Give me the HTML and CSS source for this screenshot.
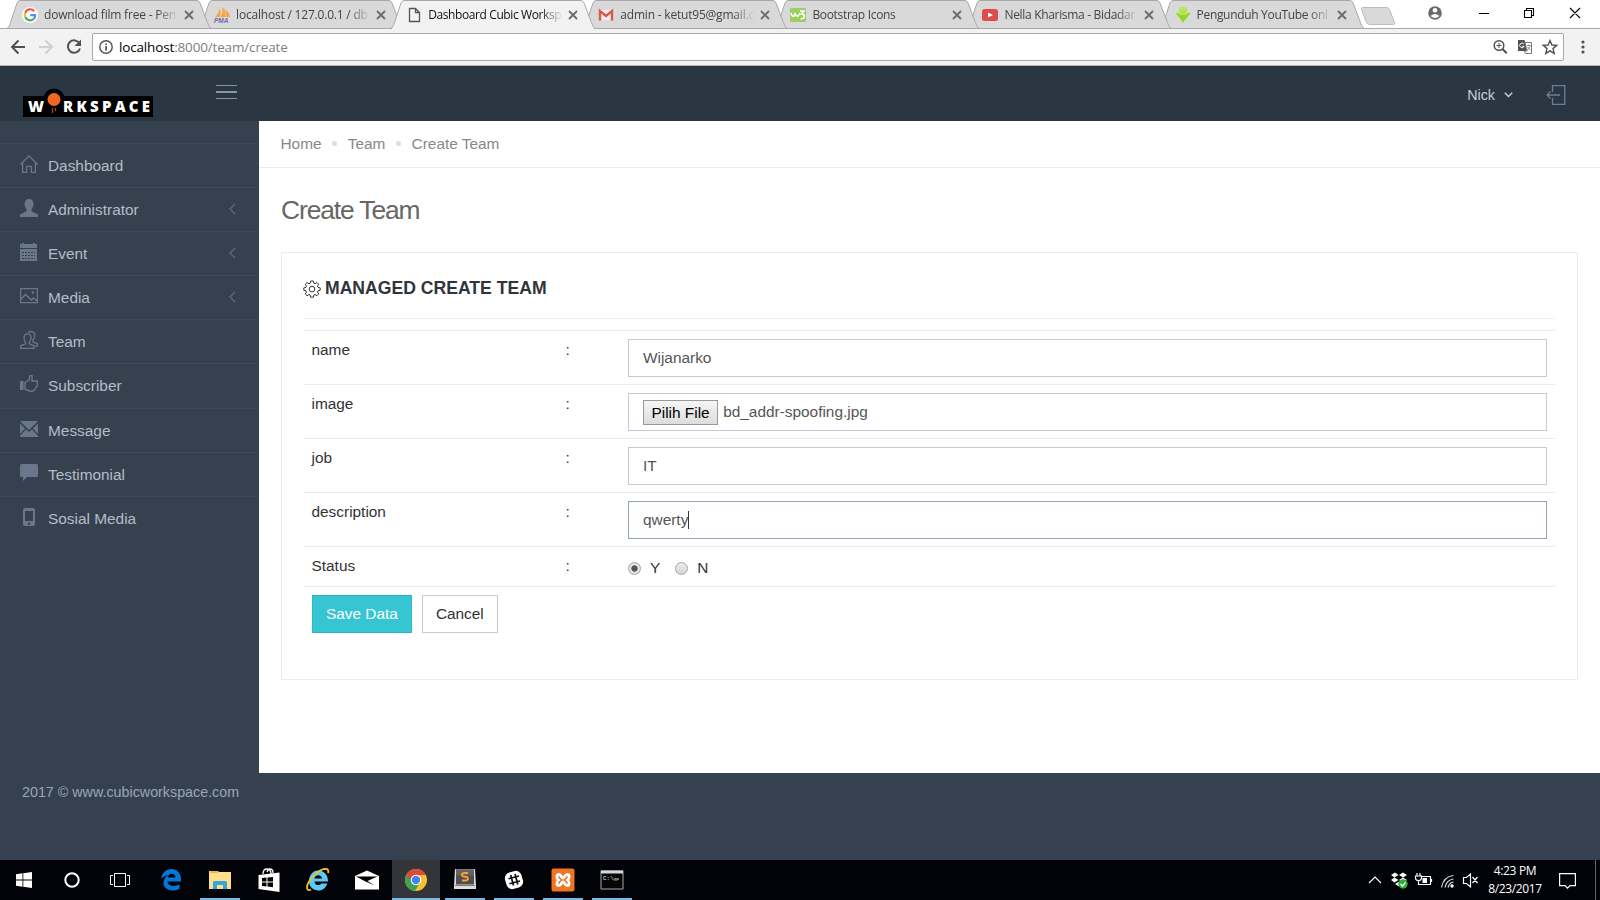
FILE: index.html
```html
<!DOCTYPE html>
<html lang="id">
<head>
<meta charset="utf-8">
<title>Dashboard Cubic Workspace</title>
<link rel="stylesheet" href="styles.css">
</head>
<body>
<svg class="defs" aria-hidden="true">
  <symbol id="tab-shape" viewBox="0 0 206 29"><path d="M.5 28.5C3 28 3.500 25 4.500 22.500L11 3Q12 .5 14 .5H191Q193 .5 194 3L201.500 22.500Q203 28 205.500 28.500Z"/></symbol>
  <symbol id="x" viewBox="0 0 10 10"><path d="M1 1l8 8M9 1L1 9" fill="none" stroke="#6b6b6b" stroke-width="1.800"/></symbol>
  <symbol id="left" viewBox="0 0 7 12"><path d="M6 1L1 6l5 5" fill="none" stroke="#606c7d" stroke-width="1.200"/></symbol>
</svg>
<div class="screen">
  <div class="tabstrip">
    <div class="tabs">
      <div class="tab t1"><svg class="shape"><use href="#tab-shape"/></svg>
        <svg class="fav" viewBox="0 0 16 16"><circle cx="8" cy="8" r="8" fill="#fff"/><g fill="none" stroke-width="2.300"><path d="M12.200 4.200A5.300 5.300 0 0 0 3.300 5.700" stroke="#e8594c"/><path d="M3.300 5.700a5.300 5.300 0 0 0 0 4.600" stroke="#f4bd2d"/><path d="M3.300 10.300a5.300 5.300 0 0 0 8.300 1.700" stroke="#4caf62"/><path d="M11.600 12A5 5 0 0 0 13.100 8.200H8.200" stroke="#5b8def"/></g></svg>
        <span class="label">download film free - Pen</span><svg class="close"><use href="#x"/></svg></div>
      <div class="tab t2"><svg class="shape"><use href="#tab-shape"/></svg>
        <svg class="fav" viewBox="0 0 16 16"><path d="M1 10Q5 6 5.500 1q2 4 1 9zM7 10Q9 5 8.500 0q4 3 3 10zM12 10V3q3 2 4 7z" fill="#f5a54c"/><text x="0" y="16" class="pma">PMA</text></svg>
        <span class="label">localhost / 127.0.0.1 / db</span><svg class="close"><use href="#x"/></svg></div>
      <div class="tab t3 active"><svg class="shape"><use href="#tab-shape"/></svg>
        <svg class="fav" viewBox="0 0 16 16"><path d="M3.500 1.500h6l4 4v9h-10zM9.500 1.500v4h4" fill="none" stroke="#555" stroke-width="1.300"/></svg>
        <span class="label">Dashboard Cubic Worksp</span><svg class="close"><use href="#x"/></svg></div>
      <div class="tab t4"><svg class="shape"><use href="#tab-shape"/></svg>
        <svg class="fav" viewBox="0 0 16 16"><path d="M2 3h12v10H2z" fill="#f2eded"/><path d="M2 13.500V4l6 5 6-5v9.500" fill="none" stroke="#d9574b" stroke-width="2.400"/></svg>
        <span class="label">admin - ketut95@gmail.c</span><svg class="close"><use href="#x"/></svg></div>
      <div class="tab t5"><svg class="shape"><use href="#tab-shape"/></svg>
        <svg class="fav" viewBox="0 0 16 16"><rect y="1" width="16" height="14" rx="1" fill="#9bcf63"/><path d="M1 6q1 4 3 3 1-1 1-3 1 4 3 3 1-1 2-3M10 4h4l-2.500 3q3 0 3 2.500-1 3-4 2" fill="none" stroke="#fff" stroke-width="1.500"/></svg>
        <span class="label">Bootstrap Icons</span><svg class="close"><use href="#x"/></svg></div>
      <div class="tab t6"><svg class="shape"><use href="#tab-shape"/></svg>
        <svg class="fav" viewBox="0 0 16 16"><rect y="2" width="16" height="12" rx="2.500" fill="#df4c4c"/><path d="M6 5.500l5 2.500-5 2.500z" fill="#fff"/></svg>
        <span class="label">Nella Kharisma - Bidadar</span><svg class="close"><use href="#x"/></svg></div>
      <div class="tab t7"><svg class="shape"><use href="#tab-shape"/></svg>
        <svg class="fav" viewBox="0 0 16 16"><path d="M4 0h2v2h1V0h2v2h1V0h2v6h3.500L8 15.500.500 6H4z" fill="#b4e84a"/><path d="M1 6h3v2h8V6h3.500L8 15.500z" fill="#93d334"/></svg>
        <span class="label">Pengunduh YouTube onl</span><svg class="close"><use href="#x"/></svg></div>
    </div>
    <svg class="newtab" viewBox="0 0 36 18"><path d="M2.500.5h24q2 0 3 2l5 13q.5 2-1 2h-24q-2 0-3-2l-5-13q-.5-2 1-2z" fill="#d9d9d9" stroke="#bcbcbc"/></svg>
    <svg class="winctl" viewBox="0 0 160 28"><circle cx="7" cy="13" r="6.800" fill="#6a6a6a"/><circle cx="7" cy="10.300" r="2.300" fill="#fff"/><path d="M2.500 16q4.500-4 9 0-4.500 4-9 0" fill="#fff"/><path d="M51 13.500h10M96.500 10.500h7v7h-7zM98.500 10.500v-2h7v7h-2M142 8l10 10M152 8l-10 10" fill="none" stroke="#000" stroke-width="1.100"/></svg>
  </div>
  <div class="toolbar">
    <svg class="nav" viewBox="0 0 92 36"><g fill="none" stroke-width="2"><path d="M25 18H12M18.500 11.500L12 18l6.500 6.500" stroke="#505050"/><path d="M39 18h13M45.500 11.500L52 18l-6.500 6.500" stroke="#d0d0d0"/><path d="M79.500 14.500A6.200 6.200 0 1 0 80 19.500" stroke="#505050"/></g><path d="M81 10.500v6.500h-6.500z" fill="#505050"/></svg>
    <div class="omnibox">
      <svg class="info" viewBox="0 0 14 14"><circle cx="7" cy="7" r="6.200" fill="none" stroke="#505050" stroke-width="1.400"/><path d="M6.200 6h1.700v4.500H6.200zM6.200 3.400h1.700V5H6.200z" fill="#505050"/></svg>
      <span class="url"><b>localhost</b>:8000/team/create</span>
      <svg class="boxicons" viewBox="0 0 68 18"><g fill="none" stroke="#505050"><circle cx="6" cy="7.500" r="4.800" stroke-width="1.500"/><path d="M9.500 11l4.200 4.200" stroke-width="2"/><path d="M3.500 7.500h5M6 5v5"/></g><path d="M25 2h6.500l3 11H25z" fill="#505050"/><path d="M32 4.500h6.500v11h-6L31 13h3z" fill="#fff" stroke="#777"/><path d="M33.800 7.500h4M35.700 6.500v1M37 8q-1 3-3 4M34.500 9l3 3" stroke="#777" stroke-width=".8" fill="none"/><path d="M30.800 6a2.300 2.300 0 1 0 .3 2.400h-2" stroke="#fff" fill="none"/><path d="M57 2.500l1.900 4.500 4.800.4-3.700 3.200 1.200 4.800L57 12.800l-4.200 2.600 1.200-4.800-3.700-3.200 4.800-.4z" fill="none" stroke="#505050" stroke-width="1.400"/></svg>
    </div>
    <svg class="dots" viewBox="0 0 4 16"><g fill="#505050"><circle cx="2" cy="3" r="1.600"/><circle cx="2" cy="8" r="1.600"/><circle cx="2" cy="13" r="1.600"/></g></svg>
  </div>
  <header class="header">
    <svg class="logo" viewBox="0 0 131 30"><circle cx="31" cy="11" r="10.500" fill="#000"/><path d="M0 8h130v21H0z" fill="#000"/><circle cx="31" cy="11.500" r="6.500" fill="#f26522"/><path d="M29.500 20v5M32.500 20v3" stroke="#a8481c" stroke-width="1.300"/><text class="logotext" x="5" y="24" textLength="16" lengthAdjust="spacingAndGlyphs">W</text><text class="logotext" x="40" y="24" textLength="87">RKSPACE</text></svg>
    <div class="burger"><i></i><i></i><i></i></div>
    <div class="user"><span>Nick</span><svg class="caret" viewBox="0 0 9 6"><path d="M.8.8l3.700 3.700L8.200.8" fill="none" stroke="#c6cfda" stroke-width="1.500"/></svg></div>
    <svg class="logout" viewBox="0 0 20 20"><path d="M6.500 7V.7h12.300v18.600H6.500V13M14 10H1M4.500 6.500L1 10l3.500 3.500" fill="none" stroke="#6b7f98" stroke-width="1.300"/></svg>
  </header>
  <div class="middle">
    <nav class="sidebar">
      <a class="item"><svg viewBox="0 0 18 18"><path d="M.5 9.500L9 .9l8.500 8.600M2.600 8v9.400h4v-6h4.800v6h4V8" fill="none" stroke="#6a778b" stroke-width="1.300"/></svg>Dashboard</a>
      <a class="item"><svg viewBox="0 0 18 18"><path d="M9 0c3 0 4.500 2 4.500 5 0 2.500-1 4-2 5.300v2L18 15.500V18H0v-2.500l6.500-3.200v-2C5.500 9 4.500 7.500 4.500 5 4.500 2 6 0 9 0z"/></svg>Administrator<svg class="arrow"><use href="#left"/></svg></a>
      <a class="item"><svg viewBox="0 0 18 18"><path d="M0 1h2V0h2v1h9V0h2v1h2v4H0zM0 6h17v12H0z"/><path d="M2 9.500h13M2 12.500h13M2 15.500h13" stroke="#364150" stroke-dasharray="2 1"/></svg>Event<svg class="arrow"><use href="#left"/></svg></a>
      <a class="item"><svg viewBox="0 0 18 18"><path d="M.6 1.600h16.800v14H.6zM1 12l4.500-4.500 6 5.500 2-2L17 14" fill="none" stroke="#6a778b" stroke-width="1.300"/><circle cx="13" cy="5.500" r="1.200"/></svg>Media<svg class="arrow"><use href="#left"/></svg></a>
      <a class="item"><svg viewBox="0 0 18 18"><path d="M7.500 2.800c2.300 0 3.500 1.700 3.500 4 0 2-.7 3.200-1.700 4.400v1.600l4.700 2v2.600H.6v-2.600l5-2v-1.600C4.500 10 4 8.800 4 6.800c0-2.300 1.200-4 3.500-4zM8 1.500Q9 .6 11 .6c2.500 0 3.800 1.800 3.800 4 0 2-.8 3.200-1.800 4.200V11l4.400 1.800v2.400h-2.400" fill="none" stroke="#6a778b" stroke-width="1.300"/></svg>Team</a>
      <a class="item tall"><svg viewBox="0 0 18 18"><path d="M0 6h3.500v9H0z"/><path d="M5 7.500L9 5l1-4.400h2V6h5.400v4.500L14 15.500l-2.500 1L7 15l-2-1z" fill="none" stroke="#6a778b" stroke-width="1.400"/></svg>Subscriber</a>
      <a class="item"><svg viewBox="0 0 18 18"><path d="M0 1h18L9 10zM0 3.500l5 5L0 14zM18 3.500l-5 5 5 5.500zM6 9.500l3 2.500 3-2.500 6 6.500v1H0v-1z"/></svg>Message</a>
      <a class="item"><svg viewBox="0 0 18 18"><path d="M1.500 0h15q1.500 0 1.500 1.500v10q0 1.500-1.500 1.500H7l-4 4v-4H1.500Q0 13 0 11.500v-10Q0 0 1.500 0z"/></svg>Testimonial</a>
      <a class="item"><svg viewBox="0 0 18 18"><path fill-rule="evenodd" d="M5 0h8q2 0 2 2v14q0 2-2 2H5q-2 0-2-2V2q0-2 2-2zM5 3v10h8V3zM9 14.500a1.200 1.200 0 1 0 .01 0z"/></svg>Sosial Media</a>
    </nav>
    <main class="content">
      <div class="crumbs"><span>Home</span><i></i><span>Team</span><i></i><span>Create Team</span></div>
      <h1>Create Team</h1>
      <section class="card">
        <h2><svg viewBox="0 0 18 18"><g fill="none" stroke="#2f353b"><path d="M7.700 1h2.600l.5 2.200 1.200.5 2-1.200 1.700 1.700-1.200 2 .5 1.200 2.200.5v2.400l-2.200.5-.5 1.200 1.200 2-1.700 1.700-2-1.200-1.200.5-.5 2.200H7.700l-.5-2.200-1.200-.5-2 1.200-1.700-1.700 1.200-2-.5-1.200L.8 10.300V7.900L3 7.400l.5-1.200-1.200-2L4 2.500l2 1.200 1.200-.5z"/><circle cx="9" cy="9.100" r="2.800"/></g></svg>MANAGED CREATE TEAM</h2>
        <form class="rows">
          <div class="row"><label>name</label><span>:</span><div class="field">Wijanarko</div></div>
          <div class="row"><label>image</label><span>:</span><div class="field"><span class="pick">Pilih File</span>bd_addr-spoofing.jpg</div></div>
          <div class="row"><label>job</label><span>:</span><div class="field">IT</div></div>
          <div class="row"><label>description</label><span>:</span><div class="field focus">qwerty<i class="cursor"></i></div></div>
          <div class="row status"><label>Status</label><span>:</span><div class="radios"><i class="radio on"></i><span>Y</span><i class="radio"></i><span>N</span></div></div>
          <div class="actions"><span class="btn save">Save Data</span><span class="btn">Cancel</span></div>
        </form>
      </section>
    </main>
  </div>
  <footer class="footer">2017 © www.cubicworkspace.com</footer>
  <div class="taskbar">
    <div class="slot"><svg viewBox="0 0 24 24"><path d="M4 6.300l6.500-1v6.200H4zM11.300 5.200L20 4v7.500h-8.700zM4 12.500h6.500v6.200L4 17.700zM11.300 12.500H20V20l-8.700-1.200z" fill="#fff"/></svg></div>
    <div class="slot"><svg viewBox="0 0 24 24"><circle cx="12" cy="12" r="6.700" fill="none" stroke="#fff" stroke-width="2"/></svg></div>
    <div class="slot"><svg viewBox="0 0 24 24"><path d="M6.500 5.500h11v13h-11zM5 7.500H2.500v9H5M19 7.500h2.500v9H19" fill="none" stroke="#fff"/></svg></div>
    <div class="slot apps"><svg viewBox="0 0 24 24"><path d="M2 11C3 4 8 1 12.500 1 18.500 1 22 5.500 22 11v2.500H8.500c.5 5 7.500 5.500 12 2.700v4.500C14 24.500 4.500 22 4.500 15c0-3.500 2-6.500 5-8C6 7.500 3.500 9 2 11zm6.800-1.500h7.500c0-5-6.800-5-7.500 0z" fill="#0078d7"/></svg></div>
    <div class="slot run"><svg viewBox="0 0 24 24"><path d="M1 3h9l1 1h12v17H1z" fill="#ffe08a"/><path d="M2 3h8v2H2z" fill="#f0b93a"/><path d="M5 21v-6.500Q5 13 6.500 13h11q1.500 0 1.500 1.500V21h-4v-4H9v4z" fill="#33a6de"/></svg></div>
    <div class="slot"><svg viewBox="0 0 24 24"><path d="M6 6q0-5 4-5t4 5M10 4q1-3 3-3 3 0 3 4" fill="none" stroke="#fff" stroke-width="1.300"/><path d="M1.500 7L22.500 4.500V24l-21-3z" fill="#fff"/><path d="M5 10l4.500-.5v4H5zM10.500 9.400L16 9v4.500h-5.500zM5 14.500h4.500v4L5 18zM10.500 14.500H16v4.700l-5.500-.6z" fill="#000"/></svg></div>
    <div class="slot"><svg viewBox="0 0 24 24"><path d="M12 2.500c6 0 10 4 10 11H8.500c.5 4 4 4.500 7 2h6C19.500 20 16.500 22.500 12.500 22.500 7 22.500 3 18.500 3 13S7 2.500 12 2.500zM8.500 10.500H16C15.500 6.500 9.500 6 8.500 10.500z" fill="#5fcaf5"/><path d="M5 21.500C1 24-1 19 4 12 9 4.500 18-1 21.500 1.500c1 .8 1 2 .5 3.500" fill="none" stroke="#f5c518" stroke-width="1.800"/></svg></div>
    <div class="slot"><svg viewBox="0 0 24 24"><path d="M0 8l12-5.500L24 8v13.500H0z" fill="#fff"/><path d="M1 8.500h21.500l-10 4.500 7 4.500-9-4z" fill="#000"/></svg></div>
    <div class="slot run wide"><svg viewBox="0 0 24 24"><circle cx="12" cy="12" r="11" fill="#f5c22f"/><path d="M12 12L2.500 6.500A11 11 0 0 0 11 23l5-8.500z" fill="#3ba257"/><path d="M2.500 6.500A11 11 0 0 1 21.800 7H12L7.700 14.500z" fill="#dc4a3d"/><circle cx="12" cy="12" r="5.300" fill="#fff"/><circle cx="12" cy="12" r="4.200" fill="#4285f4"/></svg></div>
    <div class="slot run"><svg viewBox="0 0 24 24"><path d="M2 1h20l1 17v3H1v-3z" fill="#ddd"/><path d="M3 1.500h18v15H3z" fill="#4e4e4e"/><path d="M3 1.500h18v6H3z" fill="#636363"/><path d="M2 17.500h20" stroke="#777"/><path d="M15 5h-3.500Q9 5 9 6.800t2.500 1.900h1Q15 8.700 15 10.600t-2.500 1.900H9" fill="none" stroke="#ff9d35" stroke-width="1.900"/></svg></div>
    <div class="slot run"><svg viewBox="0 0 24 24"><rect x="3.500" y="3.500" width="17" height="17" rx="6" fill="#fff" transform="rotate(-17 12 12)"/><path d="M8.700 7l2.800 10.500M13 6l2.800 10.500M6.500 10.800L17 8M7.500 15.800L18 13" stroke="#111" stroke-width="1.700"/></svg></div>
    <div class="slot run"><svg viewBox="0 0 24 24"><rect x=".5" y=".5" width="23" height="23" rx="2" fill="#f07423"/><path d="M8 6.500c2.500 0 2 3.500 4 3.500s1.500-3.500 4-3.500S19 10 16.500 12c2.500 2 2 5.500-.5 5.500s-2-3.500-4-3.500-1.500 3.500-4 3.500S5 14 7.500 12C5 10 5.500 6.500 8 6.500z" fill="none" stroke="#fff" stroke-width="2.800"/></svg></div>
    <div class="slot run"><svg viewBox="0 0 24 24"><path d="M1 3h22v18H1z" fill="#050505" stroke="#aaa"/><path d="M1 2.500h22v3H1z" fill="#d7d7d7"/><text x="3" y="11.500" class="cmd">C:\_</text><path d="M14 11h5" stroke="#ddd"/></svg></div>
    <div class="tray">
      <svg class="trayicons" viewBox="0 0 113 20"><g fill="none" stroke="#fff" stroke-width="1.200"><path d="M1 13l6-6 6 6"/><path d="M53 6.500h9.500v8H51M63.500 9v3M47.500 6h6v2q0 2.500-3 2.500t-3-2.500zM49 6V3M52 6V3M50.500 10.500v4H53"/><path d="M73.500 17.500Q75.500 6.500 85.500 5.500M77 17.500Q78.500 10 85.500 9M80 17.500Q81.500 12.500 85.500 12" stroke="#ddd"/><path d="M95.500 7.500h3l4-3.500v13l-4-3.500h-3zM104.500 7l5 6M109.500 7l-5 6"/></g><path d="M54.500 8H59v5h-4.500z" fill="#fff"/><circle cx="84" cy="16" r="1.700" fill="#fff"/><path d="M23 5l4-2.500 3.500 2.500-4 2.500zM31 5l4-2.500L39 5l-4 2.500zM23 10l3.500-2.500 4 2.500-4 2.500zM31 10l4-2.500 4 2.500-4 2.500zM27 14l4-2.500 4 2.500-4 2.500z" fill="#fff"/><circle cx="35" cy="14" r="4.700" fill="#2fae3c"/><path d="M32.500 14l2 2 3-3.500" fill="none" stroke="#fff" stroke-width="1.200"/></svg>
      <div class="clock"><span>4:23 PM</span><span>8/23/2017</span></div>
      <svg class="notice" viewBox="0 0 17 17"><path d="M.6 1.600h15.800v12H11l-2.500 2.500L6 13.600H.6z" fill="none" stroke="#fff" stroke-width="1.200"/></svg>
    </div>
  </div>
</div>
</body>
</html>
```

FILE: styles.css
```css
* { box-sizing: border-box; }
body { margin: 0; font-family: "Liberation Sans", Arial, sans-serif; font-size: 15.4px; color: #333; }
svg { display: block; flex: none; }
.defs { position: absolute; width: 0; height: 0; }
.screen { width: 1600px; height: 900px; display: flex; flex-direction: column; overflow: hidden; background: #364150; }

/* browser window */
.tabstrip { height: 29px; flex: none; display: flex; background: #fff; border-bottom: 1px solid #a9a9a9; font-family: "Open Sans", sans-serif; font-size: 12px; padding-left: 6px; }
.tabs { display: flex; width: 1354px; flex: none; }
.tab { position: relative; width: 192.1px; height: 29px; flex: none; display: flex; align-items: center; padding-left: 16px; color: #444; }
.shape { position: absolute; left: 0; top: 0; width: 206px; height: 29px; fill: #d9d9d9; stroke: #a9a9a9; }
.t1 { z-index: 7; } .t2 { z-index: 6; } .t4 { z-index: 5; } .t5 { z-index: 4; } .t6 { z-index: 3; } .t7 { z-index: 2; }
.active { z-index: 8; color: #111; }
.active .shape { fill: #f2f2f2; }
.active::after { content: ""; position: absolute; left: 2px; width: 202px; top: 28px; height: 2px; background: #f2f2f2; }
.fav, .label, .close { position: relative; }
.fav { width: 16px; height: 16px; margin-right: 6px; }
.label { width: 134px; white-space: nowrap; letter-spacing: -.32px; -webkit-mask-image: linear-gradient(90deg, #000 112px, transparent 135px); mask-image: linear-gradient(90deg, #000 112px, transparent 135px); }
.t1 .label, .t2 .label, .t4 .label { letter-spacing: -.2px; }
.t3 .label { letter-spacing: -.4px; }
.close { width: 10px; height: 10px; margin-left: 6px; }
.pma { font: italic bold 6.500px "Liberation Sans", sans-serif; fill: #6c6ca8; }
.newtab { width: 36px; height: 18px; margin-top: 7px; }
.winctl { width: 160px; height: 28px; margin-left: 32px; }
.toolbar { height: 37px; flex: none; display: flex; align-items: center; background: #f2f2f2; border-bottom: 1px solid #b6b4b6; }
.nav { width: 92px; height: 36px; }
.omnibox { width: 1472px; height: 28px; display: flex; align-items: center; border: 1px solid #a9a9a9; border-radius: 2px; background: #fff; padding-left: 6px; }
.info { width: 14px; height: 14px; }
.url { margin-left: 6px; font-family: "Open Sans", sans-serif; font-size: 13.500px; letter-spacing: -.16px; color: #808080; flex: 1; }
.url b { font-weight: 400; color: #000; }
.boxicons { width: 68px; height: 18px; margin-right: 2px; }
.dots { width: 4px; height: 16px; margin-left: 17px; }

/* application */
.header { height: 55px; flex: none; display: flex; background: #2b3643; }
.logo { width: 131px; height: 30px; margin: 22px 0 0 23px; }
.logotext { font: 800 15px "Open Sans", sans-serif; fill: #fff; }
.burger { width: 21px; margin: 19px 0 0 62px; display: flex; flex-direction: column; gap: 5px; }
.burger i { height: 1px; background: #8796ab; }
.burger i:nth-child(2) { height: 2px; }
.user { display: flex; align-items: center; margin-left: auto; color: #c6cfda; font-size: 14.300px; padding-top: 3px; }
.caret { width: 9px; height: 6px; margin-left: 9px; }
.logout { width: 20px; height: 20px; margin: 19px 34px 0 33px; }
.middle { height: 652px; flex: none; display: flex; }
.sidebar { width: 259px; flex: none; padding-top: 22px; background: #364150; }
.item { height: 44px; display: flex; align-items: center; border-top: 1px solid #3d4957; padding: 0 23px 0 20px; color: #b4bcc8; }
.tall { height: 45px; padding-bottom: 1px; }
.item svg { width: 18px; height: 18px; margin: -3px 10px 0 0; fill: #6a778b; }
.item .arrow { width: 7px; height: 12px; margin: -1px 0 0 auto; }
.content { flex: 1; background: #fff; }
.crumbs { height: 47px; display: flex; align-items: center; border-bottom: 1px solid #e7ecf1; padding: 0 0 1px 21.500px; color: #888; }
.crumbs i { width: 5px; height: 5px; border-radius: 50%; background: #ddd; margin: 0 10.600px; }
h1 { height: 84px; margin: 0; padding: 27px 0 0 22px; font-size: 26.400px; line-height: 30px; font-weight: 400; letter-spacing: -1.100px; color: #666; }
.card { width: 1297px; height: 428px; margin-left: 22px; border: 1px solid #e7ecf1; padding: 13px 22px; }
h2 { height: 53px; margin: 0; display: flex; align-items: center; padding-bottom: 8px; border-bottom: 1px solid #eef1f5; font-size: 17.600px; color: #2f353b; }
h2 svg { width: 18px; height: 18px; margin: 1px 4px 0 -1px; }
.rows { margin-top: 11px; }
.row { height: 54px; display: grid; grid-template-columns: 254px 61px 1fr; border-top: 1px solid #e7ecf1; padding: 8px 8px 0 7.500px; }
.row label, .row > span { line-height: 21px; }
.field { height: 38px; display: flex; align-items: center; margin-left: 1.500px; border: 1px solid #c2cad8; padding: 0 14px; color: #555; }
.focus { border-color: #93a1bb; }
.cursor { width: 1px; height: 18px; background: #333; }
.pick { height: 25px; line-height: 23px; border: 1px solid #999; background: linear-gradient(#f6f6f6, #ddd); color: #000; padding: 0 7.500px; margin-right: 5px; }
.status { height: 40px; }
.radios { display: flex; align-items: center; height: 25px; margin-left: 1.500px; }
.radio { width: 13px; height: 13px; border: 1px solid #a5a5a5; border-radius: 50%; background: linear-gradient(#eee, #d5d5d5); margin-top: 2px; }
.on { background: radial-gradient(circle, #555 0 2.800px, #e2e2e2 3.500px); }
.radios span { margin: 0 15px 0 9px; }
.actions { display: flex; gap: 10px; padding: 8px; border-top: 1px solid #e7ecf1; }
.btn { height: 38px; line-height: 36px; border: 1px solid #ccc; padding: 0 13px; }
.save { background: #36c6d3; border-color: #2bb8c4; color: #fff; }
.footer { height: 87px; flex: none; padding: 11px 22px; color: #98a6ba; font-size: 14.300px; }

/* desktop taskbar */
.taskbar { height: 40px; flex: none; display: flex; gap: 1px; background: #010308; }
.slot { position: relative; width: 48px; height: 40px; flex: none; display: flex; align-items: center; justify-content: center; }
.slot:nth-child(-n+2) { margin-right: -1px; }
.slot svg { width: 24px; height: 24px; }
.apps { margin-left: 2px; }
.run::after { content: ""; position: absolute; left: 4px; right: 4px; bottom: 0; height: 2px; background: #76b9ed; }
.wide { background: #343538; }
.wide::after { left: 0; right: 0; }
.cmd { font: 6px "Liberation Mono", monospace; fill: #eee; }
.tray { margin-left: auto; display: flex; align-items: center; width: 228px; border-right: 1px solid #666; margin-right: 4px; }
.trayicons { width: 113px; height: 20px; }
.clock { width: 68px; display: flex; flex-direction: column; text-align: center; color: #fff; font: 12px/18px "Open Sans", sans-serif; letter-spacing: -.35px; }
.notice { width: 17px; height: 17px; margin-left: 10px; }
```
